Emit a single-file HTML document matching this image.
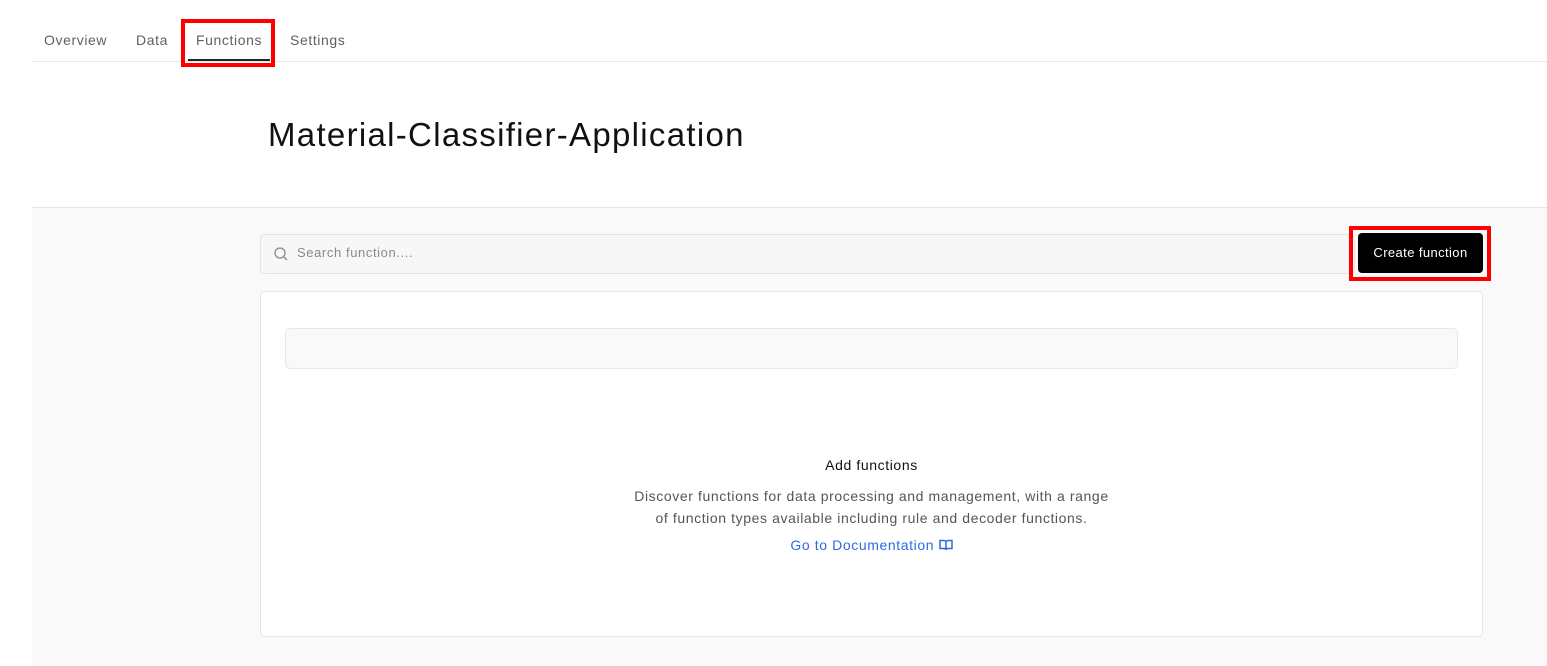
<!DOCTYPE html>
<html><head><style>
*{box-sizing:border-box;margin:0;padding:0}
body{width:1547px;height:666px;background:#fff;font-family:"Liberation Sans",sans-serif;position:relative;overflow:hidden;letter-spacing:0.6px}
.a{position:absolute}
.tab{position:absolute;top:32px;font-size:14px;color:#5f5f68}
</style></head><body>
<div class="tab" style="left:44px">Overview</div>
<div class="tab" style="left:136px">Data</div>
<div class="tab" style="left:196px">Functions</div>
<div class="tab" style="left:290px">Settings</div>
<div class="a" style="left:32px;top:61px;width:1515px;height:1px;background:#e8e8e8"></div>
<div class="a" style="left:188px;top:59px;width:82px;height:2px;background:#222"></div>
<div class="a" style="left:181px;top:19px;width:94px;height:48px;border:4px solid #f00"></div>
<div class="a" style="left:268px;top:116px;font-size:33px;color:#111;letter-spacing:1.3px">Material-Classifier-Application</div>
<div class="a" style="left:32px;top:207px;width:1515px;height:459px;background:#f9f9f9;border-top:1px solid #e6e6e6"></div>
<div class="a" style="left:260px;top:234px;width:1095px;height:40px;border:1px solid #e4e4e4;border-radius:5px;background:#f7f7f7"></div>
<svg class="a" style="left:273px;top:246px" width="16" height="16" viewBox="0 0 16 16"><circle cx="7" cy="7" r="5" fill="none" stroke="#888" stroke-width="1.3"/><path d="M11 11l3 3" stroke="#888" stroke-width="1.3"/></svg>
<div class="a" style="left:297px;top:245px;font-size:13px;color:#8a8a8a">Search function....</div>
<div class="a" style="left:1349px;top:226px;width:142px;height:55px;border:4px solid #f00"></div>
<div class="a" style="left:1358px;top:233px;width:125px;height:40px;background:#000;border-radius:4px;color:#fff;font-size:13px;text-align:center;line-height:40px;letter-spacing:0.4px">Create function</div>
<div class="a" style="left:260px;top:291px;width:1223px;height:346px;background:#fff;border:1px solid #e6e6e6;border-radius:5px"></div>
<div class="a" style="left:285px;top:328px;width:1173px;height:41px;background:#f9f9f9;border:1px solid #e8e8e8;border-radius:5px"></div>
<div class="a" style="left:260px;top:457px;width:1223px;text-align:center;font-size:14px;color:#111">Add functions</div>
<div class="a" style="left:260px;top:485px;width:1223px;text-align:center;font-size:14px;color:#555;line-height:22px">Discover functions for data processing and management, with a range<br>of function types available including rule and decoder functions.</div>
<div class="a" style="left:260px;top:537px;width:1223px;text-align:center;font-size:14px;color:#2f6be0">Go to Documentation <svg width="14" height="12" viewBox="0 0 14 12" style="vertical-align:-1px"><path d="M1 1.5h4a2 2 0 0 1 2 2V11a1.5 1.5 0 0 0-1.5-1.5H1zM13 1.5H9a2 2 0 0 0-2 2V11a1.5 1.5 0 0 1 1.5-1.5H13z" fill="none" stroke="#2f6be0" stroke-width="1.5"/></svg></div>
</body></html>
